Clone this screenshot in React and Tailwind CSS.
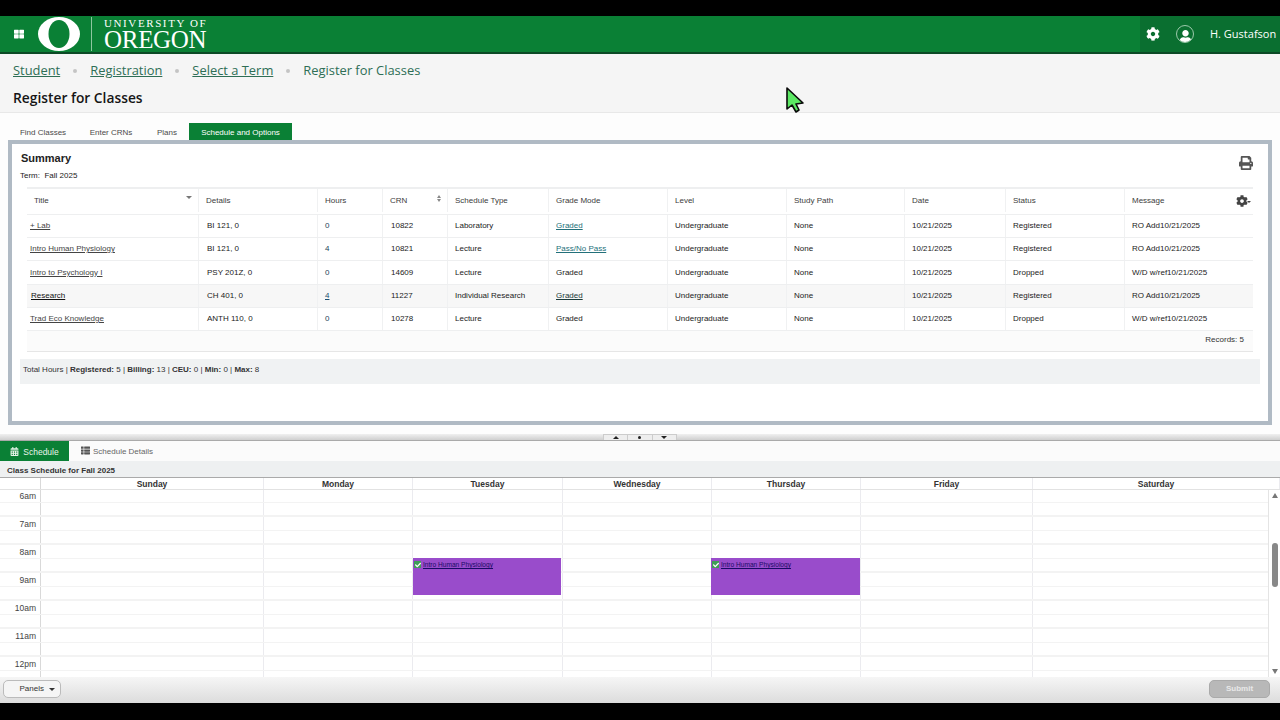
import { FaCog, FaPrint, FaThLarge, FaUser, FaCalendarAlt, FaThList, FaCheck } from "react-icons/fa";

const columns = [
  "w-[172px]",
  "w-[119px]",
  "w-[65px]",
  "w-[65px]",
  "w-[101px]",
  "w-[119px]",
  "w-[119px]",
  "w-[118px]",
  "w-[101px]",
  "w-[119px]",
  "w-[128px]",
];

const headers = ["Title", "Details", "Hours", "CRN", "Schedule Type", "Grade Mode", "Level", "Study Path", "Date", "Status", "Message"];

const rows = [
  { title: "+ Lab", details: "BI 121, 0", hours: "0", crn: "10822", type: "Laboratory", grade: "Graded", gradeLink: true, status: "Registered", message: "RO Add10/21/2025", h: "h-[23px]" },
  { title: "Intro Human Physiology", details: "BI 121, 0", hours: "4", crn: "10821", type: "Lecture", grade: "Pass/No Pass", gradeLink: true, status: "Registered", message: "RO Add10/21/2025", h: "h-[23px]" },
  { title: "Intro to Psychology I", details: "PSY 201Z, 0", hours: "0", crn: "14609", type: "Lecture", grade: "Graded", status: "Dropped", message: "W/D w/ref10/21/2025", h: "h-[24px]" },
  { title: "Research", details: "CH 401, 0", hours: "4", hoursLink: true, crn: "11227", type: "Individual Research", grade: "Graded", gradeLink: true, dark: true, status: "Registered", message: "RO Add10/21/2025", alt: true, h: "h-[23px]" },
  { title: "Trad Eco Knowledge", details: "ANTH 110, 0", hours: "0", crn: "10278", type: "Lecture", grade: "Graded", status: "Dropped", message: "W/D w/ref10/21/2025", h: "h-[23px]" },
];

const days = [
  { name: "Sunday", w: "w-[223px]" },
  { name: "Monday", w: "w-[149px]" },
  { name: "Tuesday", w: "w-[150px]" },
  { name: "Wednesday", w: "w-[149px]" },
  { name: "Thursday", w: "w-[149px]" },
  { name: "Friday", w: "w-[172px]" },
  { name: "Saturday", w: "w-[247px]" },
];

const hours = ["6am", "7am", "8am", "9am", "10am", "11am", "12pm"];

function Cell({ w, children, className = "" }) {
  return <div className={`${w} shrink-0 h-full flex items-center px-[7px] border-r border-[#f0f1f2] ${className}`}>{children}</div>;
}

function Row({ row }) {
  return (
    <div className={`flex ${row.h} border-b border-[#eeeff0] text-[8px] text-[#222] ${row.alt ? "bg-[#f7f7f7]" : "bg-white"}`}>
      <Cell w={columns[0]} className="!px-[3px]">
        <a href="#" className={`underline ${row.dark ? "text-[#111] pl-[1px]" : "text-[#444]"}`}>{row.title}</a>
      </Cell>
      <Cell w={columns[1]} className="!pl-[8px]">{row.details}</Cell>
      <Cell w={columns[2]}>
        <span className={row.hoursLink ? "underline text-[#1c4f72]" : "text-[#1c3f5a]"}>{row.hours}</span>
      </Cell>
      <Cell w={columns[3]} className="!pl-[8px]">{row.crn}</Cell>
      <Cell w={columns[4]}>{row.type}</Cell>
      <Cell w={columns[5]}>
        {row.gradeLink ? (
          <a href="#" className={`underline ${row.dark ? "text-[#1a3a3a]" : "text-[#23707a]"}`}>{row.grade}</a>
        ) : (
          row.grade
        )}
      </Cell>
      <Cell w={columns[6]}>Undergraduate</Cell>
      <Cell w={columns[7]}>None</Cell>
      <Cell w={columns[8]}>10/21/2025</Cell>
      <Cell w={columns[9]}>{row.status}</Cell>
      <Cell w={columns[10]} className="border-r-0">{row.message}</Cell>
    </div>
  );
}

function HourRow({ label, first }) {
  return (
    <>
      <div className={`flex ${first ? "h-[13px]" : "h-[14px]"} border-b border-[#f3f3f3]`}>
        <div className={`w-[41px] shrink-0 h-full border-r border-[#d9d9d9] pr-[4px] text-right text-[8.5px] text-[#444] ${first ? "leading-[12px]" : "leading-[14px]"}`}>{label}</div>
        {days.map((d) => (
          <div key={d.name} className={`${d.w} shrink-0 h-full border-r border-[#ebebef]`} />
        ))}
      </div>
      <div className="flex h-[14px] border-b-2 border-[#f3f3f3]">
        <div className="w-[41px] shrink-0 h-full border-r border-[#d9d9d9]" />
        {days.map((d) => (
          <div key={d.name} className={`${d.w} shrink-0 h-full border-r border-[#ebebef]`} />
        ))}
      </div>
    </>
  );
}

function CalEvent({ className }) {
  return (
    <div className={`absolute top-[68px] h-[37px] bg-[#994ccb] flex items-start pt-[2px] px-[1px] ${className}`}>
      <span className="w-[7px] h-[7px] mt-[1px] bg-[#3f9e57] flex items-center justify-center shrink-0">
        <FaCheck className="text-white text-[6px]" />
      </span>
      <a href="#" className="ml-[2px] text-[6.6px] leading-[10px] underline text-[#1a0a66]">Intro Human Physiology</a>
    </div>
  );
}

export default function App() {
  return (
    <div className="relative w-[1280px] h-[720px] overflow-hidden bg-black flex flex-col font-['Liberation_Sans',sans-serif]">
      <div className="h-[16px] shrink-0 bg-black" />

      {/* Barra superior */}
      <header className="h-[38px] shrink-0 flex bg-[#0a8035] border-b-2 border-[#0c4a26] text-white">
        <div className="flex items-center flex-1">
          <FaThLarge className="ml-[14px] text-[10px]" />
          <svg className="ml-[14px]" width="42" height="34" viewBox="0 0 42 34">
            <ellipse cx="21" cy="17" rx="21" ry="17" fill="#fff" />
            <ellipse cx="21" cy="17" rx="10.5" ry="14" fill="#0a8035" />
          </svg>
          <div className="ml-[11px] w-px h-[34px] bg-[#8fc7a0]" />
          <div className="ml-[12px] font-['Liberation_Serif',serif] flex flex-col">
            <span className="text-[11px] leading-[11px] tracking-[1.6px]">UNIVERSITY OF</span>
            <span className="text-[25px] leading-[21px] tracking-[-0.3px]">OREGON</span>
          </div>
        </div>
        <div className="w-[140px] flex items-center bg-[#0a6f30] font-['Open_Sans',sans-serif]">
          <FaCog className="ml-[6px] text-[14px]" />
          <span className="ml-[16px] w-[18px] h-[18px] rounded-full border border-[#9cc9ab] flex items-end justify-center overflow-hidden">
            <FaUser className="text-[13px] -mb-[1px]" />
          </span>
          <span className="ml-[16px] text-[11px] whitespace-nowrap">H. Gustafson</span>
        </div>
      </header>

      {/* Breadcrumb y titulo */}
      <div className="h-[59px] shrink-0 bg-[#f5f5f5] border-b border-[#e8e8e8] px-[13px] font-['Open_Sans',sans-serif]">
        <nav className="flex items-center h-[33px] text-[12.9px] text-[#2e6e55]">
          <a href="#" className="underline">Student</a>
          <span className="mx-[13px] w-[4px] h-[4px] rounded-full bg-[#c4c4c4]" />
          <a href="#" className="underline">Registration</a>
          <span className="mx-[13px] w-[4px] h-[4px] rounded-full bg-[#c4c4c4]" />
          <a href="#" className="underline">Select a Term</a>
          <span className="mx-[13px] w-[4px] h-[4px] rounded-full bg-[#c4c4c4]" />
          <span>Register for Classes</span>
        </nav>
        <h1 className="text-[13.8px] leading-[21px] font-semibold text-[#151515]">Register for Classes</h1>
      </div>

      {/* Pestanas y resumen */}
      <div className="h-[321px] shrink-0 bg-[#fdfdfd] px-[8px] pt-[10px]">
        <div className="flex h-[17px] ml-[1px] text-[8px] text-[#4a4a4a]">
          <span className="w-[68px] pt-[2px] flex items-center justify-center">Find Classes</span>
          <span className="w-[68px] pt-[2px] flex items-center justify-center">Enter CRNs</span>
          <span className="w-[44px] pt-[2px] flex items-center justify-center">Plans</span>
          <span className="w-[103px] pt-[2px] flex items-center justify-center bg-[#0a8035] text-white">Schedule and Options</span>
        </div>
        <section className="h-[285px] w-[1264px] border-4 border-[#b0bac4] bg-white relative">
          <div className="h-[43px] pl-[8px] pt-[8px] text-[#222]">
            <h2 className="pl-[1px] text-[11px] leading-[13px] font-bold">Summary</h2>
            <p className="mt-[5px] text-[8px] leading-[11px]">Term:&nbsp; Fall 2025</p>
          </div>
          <FaPrint className="absolute right-[15px] top-[12px] text-[14px] text-[#555]" />

          <div className="ml-[15px] w-[1226px] border-t-2 border-[#eeeff0]">
            <div className="flex h-[26px] pb-[2px] border-b border-[#eeeff0] text-[8px] text-[#3c3c3c] bg-white">
              {headers.map((h, i) => (
                <Cell key={h} w={columns[i]} className={`relative ${i === 10 ? "border-r-0" : ""}`}>
                  {h}
                  {i === 0 && <span className="absolute right-[6px] top-[7px] border-x-[3px] border-x-transparent border-t-[3px] border-t-[#777]" />}
                  {i === 3 && (
                    <span className="absolute right-[6px] top-[6px] flex flex-col gap-[1px]">
                      <span className="border-x-[2px] border-x-transparent border-b-[3px] border-b-[#888]" />
                      <span className="border-x-[2px] border-x-transparent border-t-[3px] border-t-[#888]" />
                    </span>
                  )}
                  {i === 10 && (
                    <>
                      <FaCog className="absolute right-[5px] top-[6px] text-[12px] text-[#444]" />
                      <i className="absolute right-[2px] top-[12px] border-x-[2px] border-x-transparent border-t-[2px] border-t-[#444]" />
                    </>
                  )}
                </Cell>
              ))}
            </div>
            {rows.map((r) => (
              <Row key={r.crn} row={r} />
            ))}
            <div className="h-[21px] bg-[#fbfbfb] border-b border-[#e6e6e6]" />
          </div>
          <div className="absolute right-[24px] top-[190px] text-[8px] text-[#333]">Records: 5</div>

          <div className="absolute left-[8px] top-[215px] w-[1240px] h-[25px] bg-[#f0f2f3] pl-[3px] pt-[5px] text-[8px] leading-[11px] text-[#333]">
            Total Hours |&nbsp;<b>Registered:</b>&nbsp;5 |&nbsp;<b>Billing:</b>&nbsp;13 |&nbsp;<b>CEU:</b>&nbsp;0 |&nbsp;<b>Min:</b>&nbsp;0 |&nbsp;<b>Max:</b>&nbsp;8
          </div>
        </section>
      </div>

      {/* Separador */}
      <div className="h-[7px] shrink-0 bg-gradient-to-b from-[#f0f0f0] to-[#cfcfcf] border-b border-[#aaa] relative">
        <div className="absolute left-[603px] top-0 w-[74px] h-[6px] flex border border-b-0 border-[#ccc] bg-[#eee] text-[#222]">
          <span className="flex-1 flex items-center justify-center border-r border-[#ccc]"><i className="border-x-[3px] border-x-transparent border-b-[3px] border-b-[#222]" /></span>
          <span className="flex-1 flex items-center justify-center border-r border-[#ccc]"><i className="w-[3px] h-[3px] rounded-full bg-[#222]" /></span>
          <span className="flex-1 flex items-center justify-center"><i className="border-x-[3px] border-x-transparent border-t-[3px] border-t-[#222]" /></span>
        </div>
      </div>

      {/* Calendario */}
      <div className="h-[20px] shrink-0 flex bg-[#fbfbfb] text-[8px]">
        <div className="w-[69px] pt-[2px] flex items-center justify-center gap-[4px] bg-[#0a8035] text-[#e8f4ea]">
          <FaCalendarAlt className="text-[9px] -mt-[2px]" />
          <span className="text-[8.5px]">Schedule</span>
        </div>
        <div className="ml-[12px] pt-[2px] flex items-center gap-[3px] text-[#666]">
          <FaThList className="text-[9px] text-[#555] -mt-[4px]" />
          <span>Schedule Details</span>
        </div>
      </div>
      <div className="h-[17px] shrink-0 bg-[#eef0f1] border-b border-[#aaa] pl-[7px] pt-[3px] flex items-center text-[8px] font-bold text-[#333]">
        Class Schedule for Fall 2025
      </div>
      <div className="h-[12px] shrink-0 flex bg-white border-b border-[#e2e2e2] text-[8.5px] font-bold text-[#333]">
        <div className="w-[41px] shrink-0 border-r border-[#d9d9d9]" />
        {days.map((d) => (
          <div key={d.name} className={`${d.w} shrink-0 text-center leading-[13px] border-r border-[#ebebef]`}>{d.name}</div>
        ))}
      </div>
      <div className="h-[187px] shrink-0 relative bg-white overflow-hidden">
        {hours.map((h, i) => (
          <HourRow key={h} label={h} first={i === 0} />
        ))}
        <CalEvent className="left-[413px] w-[148px]" />
        <CalEvent className="left-[711px] w-[149px]" />

        <div className="absolute right-0 top-0 bottom-0 w-[12px] bg-white border-l border-[#e4e4e4]">
          <span className="absolute left-[3px] top-[3px] border-x-[3px] border-x-transparent border-b-[5px] border-b-[#777]" />
          <span className="absolute left-[3px] top-[53px] w-[6px] h-[44px] rounded-full bg-[#888]" />
          <span className="absolute left-[3px] bottom-[3px] border-x-[3px] border-x-transparent border-t-[5px] border-t-[#777]" />
        </div>
      </div>

      {/* Pie */}
      <footer className="h-[26px] shrink-0 flex items-center justify-between pl-[3px] pr-[10px] pb-[2px] bg-gradient-to-b from-[#f6f6f6] to-[#dcdcdc]">
        <button className="w-[58px] h-[18px] rounded-[5px] border border-[#bbb] bg-[#f5f5f5] text-[8px] text-[#333] flex items-center justify-end pr-[5px] gap-[5px]">
          Panels
          <i className="border-x-[3px] border-x-transparent border-t-[3px] border-t-[#333]" />
        </button>
        <button className="w-[61px] h-[18px] rounded-[5px] border border-[#aaa] bg-[#b8b8b8] text-[8px] font-bold text-[#e8e8e8]">Submit</button>
      </footer>

      {/* Cursor */}
      <svg className="absolute left-[785px] top-[87px]" width="20" height="27" viewBox="0 0 20 27">
        <path d="M2 1 L2 22 L7 18 L11 25 L14 23 L11 17 L18 16 Z" fill="#5ce864" stroke="#0a0a0a" strokeWidth="1.6" strokeLinejoin="round" />
      </svg>
    </div>
  );
}
